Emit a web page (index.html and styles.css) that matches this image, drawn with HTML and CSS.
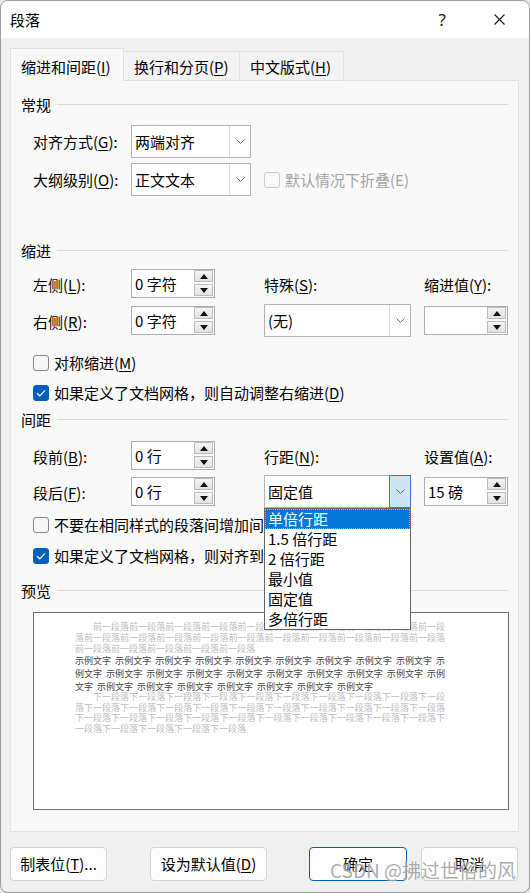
FILE: index.html
```html
<!DOCTYPE html>
<html lang="zh-CN">
<head>
<meta charset="utf-8">
<title>段落</title>
<link rel="stylesheet" href="styles.css">
</head>
<body>
<div class="window">
  <div class="titlebar">
    <span class="title">段落</span>
    <span class="help">?</span>
    <span class="close"><svg width="11" height="11" viewBox="0 0 11 11"><path d="M0.5 0.5 L10.5 10.5 M10.5 0.5 L0.5 10.5" stroke="#1a1a1a" stroke-width="1.1" fill="none"/></svg></span>
  </div>

  <div class="tabs">
    <div class="tab tab1 active">缩进和间距(<u>I</u>)</div>
    <div class="tab tab2">换行和分页(<u>P</u>)</div>
    <div class="tab tab3">中文版式(<u>H</u>)</div>
  </div>

  <div class="panel">
    <div class="sec-head"><span>常规</span></div>
    <div class="grid general">
      <div class="lbl">对齐方式(<u>G</u>):</div>
      <div class="combo"><span class="val">两端对齐</span><span class="btn"><svg width="9" height="5" viewBox="0 0 9 5"><polyline points="0.5,0.5 4.5,4.5 8.5,0.5" fill="none" stroke="#6a6a6a" stroke-width="1"/></svg></span></div>
      <div class="lbl r2">大纲级别(<u>O</u>):</div>
      <div class="combo r2"><span class="val">正文文本</span><span class="btn"><svg width="9" height="5" viewBox="0 0 9 5"><polyline points="0.5,0.5 4.5,4.5 8.5,0.5" fill="none" stroke="#6a6a6a" stroke-width="1"/></svg></span></div>
      <div class="check disabled c4 r2"><span class="box"></span><span>默认情况下折叠(E)</span></div>
    </div>

    <div class="sec-head s2"><span>缩进</span></div>
    <div class="grid six indent">
      <div class="lbl">左侧(<u>L</u>):</div>
      <div class="spin"><span class="val">0 字符</span><span class="arrows"><span class="ar"><i class="up"></i></span><span class="ar"><i class="dn"></i></span></span></div>
      <div class="lbl c4">特殊(<u>S</u>):</div>
      <div class="lbl c6">缩进值(<u>Y</u>):</div>
      <div class="lbl r2">右侧(<u>R</u>):</div>
      <div class="spin r2"><span class="val">0 字符</span><span class="arrows"><span class="ar"><i class="up"></i></span><span class="ar"><i class="dn"></i></span></span></div>
      <div class="combo c4 r2"><span class="val">(无)</span><span class="btn"><svg width="9" height="5" viewBox="0 0 9 5"><polyline points="0.5,0.5 4.5,4.5 8.5,0.5" fill="none" stroke="#6a6a6a" stroke-width="1"/></svg></span></div>
      <div class="spin c6 r2"><span class="val"></span><span class="arrows"><span class="ar"><i class="up"></i></span><span class="ar"><i class="dn"></i></span></span></div>
    </div>

    <div class="check ck1"><span class="box"></span><span>对称缩进(<u>M</u>)</span></div>
    <div class="check ck2"><span class="box on"><svg width="14" height="14" viewBox="0 0 14 14"><polyline points="3,7.2 5.8,9.8 11,4.3" fill="none" stroke="#fff" stroke-width="1.2"/></svg></span><span>如果定义了文档网格，则自动调整右缩进(<u>D</u>)</span></div>

    <div class="sec-head s3"><span>间距</span></div>
    <div class="grid six spacing">
      <div class="lbl">段前(<u>B</u>):</div>
      <div class="spin"><span class="val">0 行</span><span class="arrows"><span class="ar"><i class="up"></i></span><span class="ar"><i class="dn"></i></span></span></div>
      <div class="lbl c4">行距(<u>N</u>):</div>
      <div class="lbl c6">设置值(<u>A</u>):</div>
      <div class="lbl r2">段后(<u>F</u>):</div>
      <div class="spin r2"><span class="val">0 行</span><span class="arrows"><span class="ar"><i class="up"></i></span><span class="ar"><i class="dn"></i></span></span></div>
      <div class="combo c4 r2 open"><span class="val">固定值</span><span class="btn focus"><svg width="9" height="5" viewBox="0 0 9 5"><polyline points="0.5,0.5 4.5,4.5 8.5,0.5" fill="none" stroke="#6a6a6a" stroke-width="1"/></svg></span>
        <div class="list">
          <div class="item sel">单倍行距</div>
          <div class="item">1.5 倍行距</div>
          <div class="item">2 倍行距</div>
          <div class="item">最小值</div>
          <div class="item">固定值</div>
          <div class="item">多倍行距</div>
        </div>
      </div>
      <div class="spin c6 r2"><span class="val">15 磅</span><span class="arrows"><span class="ar"><i class="up"></i></span><span class="ar"><i class="dn"></i></span></span></div>
    </div>

    <div class="check ck3"><span class="box"></span><span class="clip">不要在相同样式的段落间增加间距(<u>C</u>)</span></div>
    <div class="check ck4"><span class="box on"><svg width="14" height="14" viewBox="0 0 14 14"><polyline points="3,7.2 5.8,9.8 11,4.3" fill="none" stroke="#fff" stroke-width="1.2"/></svg></span><span class="clip">如果定义了文档网格，则对齐到网格(<u>W</u>)</span></div>

    <div class="sec-head s4"><span>预览</span></div>
    <div class="preview">
      <p class="gray">前一段落前一段落前一段落前一段落前一段落前一段落前一段落前一段落前一段落前一段落前一段落前一段落前一段落前一段落前一段落前一段落前一段落前一段落前一段落前一段落前一段落前一段落前一段落前一段落前一段落</p>
      <p class="sample">示例文字 示例文字 示例文字 示例文字 示例文字 示例文字 示例文字 示例文字 示例文字 示例文字 示例文字 示例文字 示例文字 示例文字 示例文字 示例文字 示例文字 示例文字 示例文字 示例文字 示例文字 示例文字 示例文字 示例文字 示例文字 示例文字</p>
      <p class="gray after">下一段落下一段落下一段落下一段落下一段落下一段落下一段落下一段落下一段落下一段落下一段落下一段落下一段落下一段落下一段落下一段落下一段落下一段落下一段落下一段落下一段落下一段落下一段落下一段落下一段落下一段落下一段落下一段落下一段落下一段落下一段落下一段落下一段落下一段落下一段落</p>
    </div>
  </div>

  <div class="buttons">
    <div class="button b1">制表位(<u>T</u>)...</div>
    <div class="button b2">设为默认值(<u>D</u>)</div>
    <div class="button b3 default">确定</div>
    <div class="button b4">取消</div>
  </div>

  <div class="watermark">CSDN @拂过世俗的风</div>
</div>
</body>
</html>
```

FILE: styles.css
```css
* { box-sizing: border-box; }

html, body {
  margin: 0;
  padding: 0;
  background: #e6e6e6;
}

body {
  font-family: "Noto Sans CJK SC", "Noto Sans", sans-serif;
  font-size: 15px;
  line-height: 20px;
  color: #000;
}

u { text-decoration: underline; text-underline-offset: 2px; text-decoration-thickness: 1px; }

.window {
  position: relative;
  width: 530px;
  height: 893px;
  background: #f0f0f0;
  border: 1px solid #9c9c9c;
  border-radius: 8px;
  overflow: hidden;
}

/* title bar */
.titlebar {
  height: 37px;
  background: #ffffff;
  display: flex;
  align-items: center;
  padding-left: 9px;
}
.title { font-size: 15px; }
.help {
  margin-left: auto;
  font-size: 17px;
  font-family: "Noto Sans", sans-serif;
  color: #1a1a1a;
}
.close {
  display: flex;
  margin-left: 48px;
  margin-right: 24px;
}

/* tabs */
.tabs {
  position: relative;
  z-index: 2;
  display: flex;
  align-items: flex-end;
  margin-top: 10px;
  margin-left: 9px;
  margin-bottom: -1px;
}
.tab {
  display: flex;
  align-items: flex-end;
  padding-left: 10px;
  padding-bottom: 3px;
  height: 30px;
  background: #f3f3f3;
  border: 1px solid #e0e0e0;
  border-bottom-color: #e0e0e0;
}
.tab1 { width: 114px; height: 33px; }
.tab2 { width: 117px; margin-left: -1px; }
.tab3 { width: 105px; margin-left: -1px; }
.tab.active {
  background: #f9f9f9;
  border-bottom-color: #f9f9f9;
  z-index: 3;
}

/* panel */
.panel {
  margin-left: 9px;
  width: 509px;
  height: 752px;
  background: #f9f9f9;
  border: 1px solid #e3e3e3;
  padding: 14px 10px 0 10px;
}

.sec-head {
  display: flex;
  align-items: center;
  height: 20px;
}
.sec-head::after {
  content: "";
  flex: 1;
  margin-left: 6px;
  border-top: 1px solid #dcdcdc;
  margin-top: -2px;
}
.s2 { margin-top: 45px; }
.s3 { margin-top: 7px; }
.s4 { margin-top: 15px; }

.grid {
  display: grid;
  padding-left: 12px;
  align-items: center;
}
.general {
  grid-template-columns: 98px 120px 13px auto;
  grid-template-rows: 33px 33px;
  row-gap: 5px;
  margin-top: 10px;
}
.six {
  grid-template-columns: 98px 84px 49px 147px 13px 84px;
}
.indent {
  grid-template-rows: 29px 33px;
  row-gap: 6px;
  margin-top: 8px;
}
.spacing {
  grid-template-rows: 29px 33px;
  row-gap: 5px;
  margin-top: 11px;
}
.r2 { grid-row: 2; }
.c4 { grid-column: 4; }
.c6 { grid-column: 6; }
.lbl { white-space: nowrap; grid-column: 1; }
.lbl.c4 { grid-column: 4; }
.lbl.c6 { grid-column: 6; }
.indent .lbl, .spacing .lbl { margin-top: 2px; }
.general .combo { grid-column: 2; }
.six .spin { grid-column: 2; }
.six .spin.c6 { grid-column: 6; }
.six .combo { grid-column: 4; }

/* combo box */
.combo {
  position: relative;
  display: flex;
  height: 33px;
  background: #fff;
  border: 1px solid #b3b3b3;
}
.combo .val {
  flex: 1;
  display: flex;
  align-items: center;
  padding-left: 3px;
  white-space: nowrap;
}
.combo .btn {
  width: 21px;
  display: flex;
  align-items: center;
  justify-content: center;
  border-left: 1px solid #dadada;
}
.combo .btn.focus {
  background: #cce4f7;
  border: 1px solid #3a7cc0;
  margin: -1px -1px -1px 0;
  width: 22px;
}

.list {
  position: absolute;
  top: calc(100% + 1px);
  left: -1px;
  width: calc(100% + 2px);
  background: #fff;
  border: 1px solid #646464;
  z-index: 10;
}
.item {
  height: 20px;
  line-height: 20px;
  padding-left: 3px;
  white-space: nowrap;
}
.item.sel {
  background: #0078d7;
  color: #fff;
  outline: 1px dotted #f0a23c;
  outline-offset: -1px;
}

/* spin box */
.spin {
  display: flex;
  height: 29px;
  background: #fff;
  border: 1px solid #adadad;
}
.spin .val {
  flex: 1;
  display: flex;
  align-items: center;
  padding-left: 3px;
  white-space: nowrap;
}
.arrows {
  width: 20px;
  display: flex;
  flex-direction: column;
  gap: 2px;
  padding: 0 1px 1px 0;
}
.ar {
  flex: 1;
  display: flex;
  align-items: center;
  justify-content: center;
  background: linear-gradient(#f4f4f4, #e2e2e2);
  border: 1px solid #bcbcbc;
}
.up, .dn {
  display: block;
  width: 0;
  height: 0;
  border-left: 4px solid transparent;
  border-right: 4px solid transparent;
}
.up { border-bottom: 5px solid #111; }
.dn { border-top: 5px solid #111; }

/* checkboxes */
.check {
  display: flex;
  align-items: center;
  gap: 5px;
  height: 20px;
  white-space: nowrap;
}
.panel > .check { padding-left: 12px; }
.box {
  width: 16px;
  height: 16px;
  border: 1px solid #868686;
  border-radius: 3px;
  background: #f6f6f6;
  display: flex;
  align-items: center;
  justify-content: center;
  flex: none;
}
.box.on {
  background: #005fb8;
  border-color: #005fb8;
}
.check.disabled { color: #a3a3a3; }
.check.disabled .box { border-color: #cbcbcb; background: #f9f9f9; }
.clip {
  display: block;
  max-width: 209px;
  overflow: hidden;
}
.ck1 { margin-top: 16px; }
.ck2 { margin-top: 10px; }
.ck3 { margin-top: 7px; }
.ck4 { margin-top: 11px; }

/* preview */
.preview {
  margin-top: 11px;
  margin-left: 12px;
  width: 476px;
  height: 198px;
  background: #fff;
  border: 1px solid #6e6e6e;
  padding: 8px 63px 0 41px;
}
.preview p {
  margin: 0;
  text-align: justify;
  font-size: 9px;
}
.gray {
  color: #bdbdbd;
  line-height: 11px;
  text-indent: 18px;
}
.gray.after {
  line-height: 10.5px;
  margin-top: -1px;
}
.sample {
  color: #444;
  line-height: 13px;
  word-spacing: 2px;
}

/* buttons */
.buttons {
  display: flex;
  margin-top: 15px;
  margin-left: 9px;
}
.button {
  height: 34px;
  display: flex;
  align-items: center;
  justify-content: center;
  background: #fdfdfd;
  border: 1px solid #d2d2d2;
  border-radius: 4px;
  white-space: nowrap;
}
.b1 { width: 97px; }
.b2 { width: 117px; margin-left: 43px; }
.b3 { width: 98px; margin-left: 42px; }
.b4 { width: 97px; margin-left: 14px; }
.button.default { border-color: #005fb8; }

.watermark {
  position: absolute;
  right: 13px;
  bottom: 10px;
  font-size: 19px;
  line-height: 24px;
  color: rgba(150, 150, 150, 0.8);
  text-shadow: 0 0 2px rgba(255, 255, 255, 0.9);
  white-space: nowrap;
  pointer-events: none;
}
```
